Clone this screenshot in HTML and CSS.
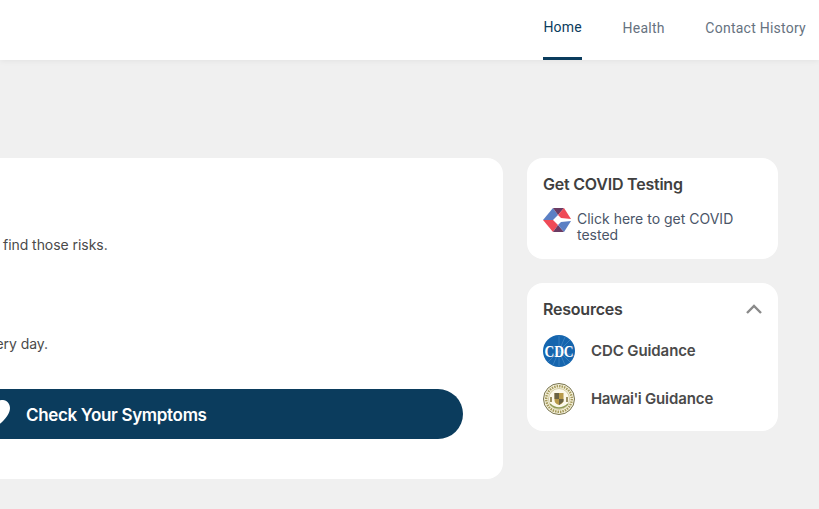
FILE: index.html
```html
<!DOCTYPE html>
<html lang="en">
<head>
<meta charset="utf-8">
<title>Home</title>
<link rel="stylesheet" href="styles.css">
</head>
<body>
<header class="topbar">
  <nav class="nav">
    <a class="nav-link is-active">Home</a>
    <a class="nav-link">Health</a>
    <a class="nav-link">Contact History</a>
  </nav>
</header>
<main class="content">
  <section class="card main-card">
    <p class="line line-risks">find those risks.</p>
    <p class="line line-day">every day.</p>
    <button class="cta">
      <svg class="cta-heart" viewBox="0 0 34 34" width="34" height="34"><path d="M18 6C20 3 24 2 27 2C31 2 34 6 34 10C34 18 24 27 14 33C8 28 2 20 2 12C2 6 8 2 12 3C15 3 17 4 18 6z" fill="#fff"/></svg>
      <span class="cta-label">Check Your Symptoms</span>
    </button>
  </section>
  <aside class="side">
    <section class="card side-card testing">
      <h2 class="side-title">Get COVID Testing</h2>
      <a class="test-link">
        <svg class="test-logo" viewBox="0 0 28 24" width="28" height="24">
          <polygon points="0,12 10,0 15,7 10,12" fill="#5b7fc4"/>
          <polygon points="0,12 10,12 15,17 10,24" fill="#ef4a57"/>
          <polygon points="10,0 21,0 15,7" fill="#6b3b63"/>
          <polygon points="21,0 28,11 18,10 15,7" fill="#ef4a57"/>
          <polygon points="10,24 21,24 15,17" fill="#6b3b63"/>
          <polygon points="28,13 21,24 15,17 18,14" fill="#5b7fc4"/>
        </svg>
        <span class="test-text">Click here to get COVID tested</span>
      </a>
    </section>
    <section class="card side-card resources">
      <div class="res-head">
        <h2 class="side-title">Resources</h2>
        <svg class="chevron" viewBox="0 0 16 10" width="16" height="10"><path d="M1 9l7-7 7 7" fill="none" stroke="#8a8a8a" stroke-width="2.400"/></svg>
      </div>
      <a class="res-item">
        <svg class="res-icon" viewBox="0 0 32 32" width="32" height="32">
          <circle cx="16" cy="16" r="16" fill="#1565ae"/>
          <path d="M16 16L16 1M16 16L22 2M16 16L27 5M16 16L31 21M16 16L27 27M16 16L22 30M16 16L16 31M16 16L10 30M16 16L5 27" stroke="#4f8fca" stroke-width=".6"/>
          <text class="cdc-text" x="16" y="22" text-anchor="middle" textLength="29" lengthAdjust="spacingAndGlyphs">CDC</text>
        </svg>
        <span class="res-label">CDC Guidance</span>
      </a>
      <a class="res-item">
        <svg class="res-icon" viewBox="0 0 32 32" width="32" height="32">
          <circle cx="16" cy="16" r="15.500" fill="#f6f2dc" stroke="#77734f"/>
          <circle cx="16" cy="16" r="12.800" fill="none" stroke="#a59a5c" stroke-width="2.400" stroke-dasharray="1.500 1"/>
          <circle cx="16" cy="16" r="10.500" fill="#fbf8ea" stroke="#b8ae72" stroke-width=".6"/>
          <path d="M11.500 10h9v7c0 3-2.300 4.300-4.500 5-2.200-.7-4.500-2-4.500-5z" fill="#b89a4a"/>
          <path d="M11.500 10h4.500v6h-4.500zM16 16h4.500v2.500L16 22z" fill="#6a6345"/>
          <path d="M8 14v5M24 14v5" stroke="#9b8f60" stroke-width="2"/>
          <path d="M7 21c3 3 6 4 9 4s6-1 9-4" fill="none" stroke="#8f9a55" stroke-width="1.500"/>
        </svg>
        <span class="res-label"><span class="tight">Hawai'i</span> Guidance</span>
      </a>
    </section>
  </aside>
</main>
</body>
</html>
```
FILE: styles.css
```css
* { box-sizing: border-box; }
html, body { height: 100%; }
body {
  margin: 0;
  overflow: hidden;
  background: #f0f0f0;
  font-family: Inter, "Liberation Sans", sans-serif;
  color: #4a4a4a;
}
.topbar {
  height: 60px;
  background: #fff;
  box-shadow: 0 1px 6px rgba(0, 0, 0, .06);
  display: flex;
  justify-content: flex-end;
  padding-right: 13px;
}
.nav { display: flex; gap: 40.5px; height: 100%; }
.nav-link {
  display: flex;
  align-items: center;
  height: 100%;
  padding-top: 2px;
  padding-bottom: 4px;
  font-family: Roboto, sans-serif;
  font-size: 14px;
  letter-spacing: .25px;
  color: #66727f;
  border-bottom: 3px solid transparent;
}
.nav-link.is-active {
  color: #0b3c5d;
  border-bottom-color: #0b3c5d;
  padding-bottom: 6px;
}
.content {
  display: flex;
  justify-content: flex-end;
  align-items: flex-start;
  gap: 24px;
  padding: 98px 41px 0 0;
}
.card { background: #fff; border-radius: 16px; }
.main-card {
  flex: none;
  width: 527px;
  height: 321px;
  padding: 77px 40px 0 0;
}
.line { margin: 0; font-size: 14px; line-height: 20px; letter-spacing: -.05px; color: #4a4a4a; white-space: nowrap; }
.line-risks { padding-left: 27px; }
.line-day { margin-top: 79px; padding-left: 4px; }
.cta {
  display: flex;
  align-items: center;
  gap: 16px;
  width: 100%;
  height: 50px;
  margin-top: 35px;
  padding: 0;
  border: 0;
  border-radius: 0 25px 25px 0;
  background: #0b3c5d;
  color: #fff;
  font: 600 17px Inter, sans-serif;
  letter-spacing: -.33px;
}
.cta-heart { flex: none; margin-top: 2px; }
.cta-label { padding-top: 2px; }
.side { flex: none; width: 251px; display: flex; flex-direction: column; gap: 24px; }
.side-card { padding: 16px; }
.testing { height: 101px; }
.resources { height: 148px; }
.side-title { margin: 0; font-size: 16px; line-height: 20px; font-weight: 600; letter-spacing: -.22px; color: #404040; }
.test-link {
  display: flex;
  align-items: flex-start;
  gap: 6px;
  margin-top: 14px;
  font-size: 14px;
  line-height: 16px;
  color: #4a5568;
}
.test-logo { flex: none; }
.test-text { padding-top: 3px; }
.res-head { display: flex; justify-content: space-between; align-items: center; }
.res-item {
  display: flex;
  align-items: center;
  gap: 16px;
  height: 32px;
  margin-top: 16px;
  font-size: 15px;
  font-weight: 600;
  letter-spacing: -.1px;
  color: #4a4a4a;
}
.res-label { margin-bottom: 2px; }
.tight { letter-spacing: -.5px; }
.res-icon { flex: none; }
.cdc-text { font: 700 17px "Liberation Serif", serif; fill: #fff; }
```
